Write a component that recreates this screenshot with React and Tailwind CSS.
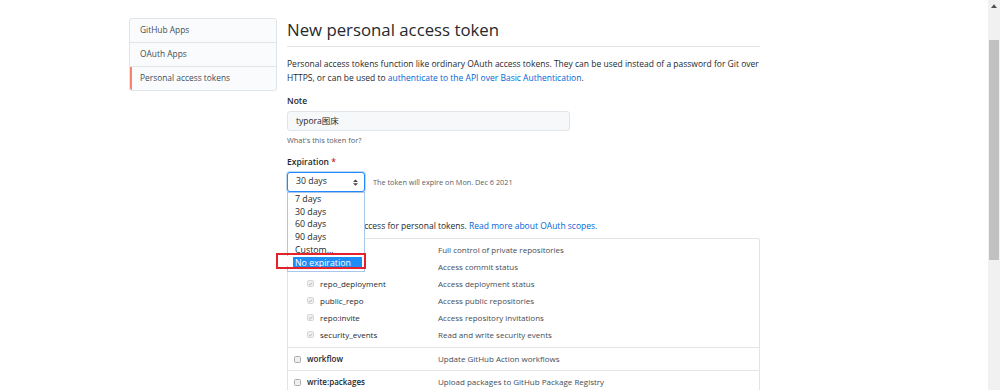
function Check({ checked, disabled }) {
  return (
    <span
      className={
        "inline-flex h-[7px] w-[7px] shrink-0 items-center justify-center rounded-[1.5px] border " +
        (disabled ? "border-[#d6d6d6] bg-[#efefef]" : "border-[#ababab] bg-[#f0f0f0]")
      }
    >
      {checked && (
        <svg viewBox="0 0 8 8" className="h-[6px] w-[6px]">
          <path d="M1.5 4.2 L3.2 5.8 L6.5 2" fill="none" stroke="#a8a8a8" strokeWidth="1.1" />
        </svg>
      )}
    </span>
  );
}

function SubRow({ label, desc }) {
  return (
    <div className="flex h-[17px] items-center">
      <div className="flex w-[150px] items-center gap-[6px] pl-[19px]">
        <Check checked disabled />
        <span>{label}</span>
      </div>
      <span className="text-[#444d56]">{desc}</span>
    </div>
  );
}

function TopRow({ label, desc }) {
  return (
    <div className="flex h-[23px] items-center border-t border-[#e1e4e8]">
      <div className="flex w-[150px] items-center gap-[6px] pl-[6px]">
        <Check />
        <span className="font-semibold">{label}</span>
      </div>
      <span className="text-[#444d56]">{desc}</span>
    </div>
  );
}

export default function App() {
  return (
    <div className="flex h-[390px] w-[1000px] overflow-hidden bg-white font-['Open_Sans','Noto_Sans_CJK_SC',sans-serif] text-[#24292e]">
      <div className="flex flex-1 flex-col">
        <div className="h-[2px]" />
        <div className="h-px bg-[#e6e6ee]" />
        <div className="flex gap-[10px] pl-[129px] pt-[18px]">
          {/* Sidebar */}
          <div className="flex h-[73px] w-[148px] flex-col overflow-hidden rounded-[3px] border border-[#e1e4e8] bg-[#fafbfc] text-[8.4px] text-[#444d56]">
            <div className="flex h-[24px] items-center border-b border-[#e1e4e8] pl-[10px]">GitHub Apps</div>
            <div className="flex h-[24px] items-center border-b border-[#e1e4e8] pl-[10px]">OAuth Apps</div>
            <div className="flex h-[23px] items-center border-l-2 border-[#f9826c] pl-[8px]">Personal access tokens</div>
          </div>

          {/* Main */}
          <div className="flex w-[473px] flex-col">
            <div className="border-b border-[#e1e4e8] pb-[4px]">
              <h2 className="text-[16.8px] leading-[24px] font-normal">New personal access token</h2>
            </div>
            <div className="mt-[10px] text-[8.5px] leading-[14px]">
              <div className="whitespace-nowrap">
                Personal access tokens function like ordinary OAuth access tokens. They can be used instead of a password for Git over
              </div>
              <div className="whitespace-nowrap">
                HTTPS, or can be used to{" "}
                <span className="text-[#0366d6]">authenticate to the API over Basic Authentication</span>.
              </div>
            </div>

            <div className="mt-[9px] text-[8.5px] leading-[14px] font-semibold">Note</div>
            <div className="mt-[3px] flex h-[20px] w-[283px] items-center rounded-[3px] border border-[#e1e4e8] bg-[#f6f8fa] pl-[8px] text-[8.5px]">
              typora图床
            </div>
            <div className="mt-[3px] text-[7.4px] leading-[12px] text-[#586069]">What's this token for?</div>

            <div className="mt-[9px] text-[8.5px] leading-[14px] font-semibold">
              Expiration <span className="text-[#cb2431]">*</span>
            </div>
            <div className="relative mt-[3px] flex items-center gap-[8px]">
              <div className="flex h-[20px] w-[78px] items-center justify-between rounded-[3px] border border-[#2188ff] bg-white pl-[8px] pr-[6px] text-[8.7px] shadow-[0_0_0_1px_rgba(3,102,214,0.25)]">
                <span>30 days</span>
                <svg viewBox="0 0 8 10" className="h-[7px] w-[5px]">
                  <path d="M4 0 L8 4 H0 Z M0 6 H8 L4 10 Z" fill="#444" />
                </svg>
              </div>
              <span className="text-[7.3px] text-[#586069]">The token will expire on Mon. Dec 6 2021</span>

              {/* Dropdown list */}
              <div className="absolute left-0 top-[20px] z-10 flex w-[78px] flex-col border border-[#a9c7ea] bg-white pb-[2px] text-[8.8px] leading-[12.7px]">
                <div className="pl-[7px]">7 days</div>
                <div className="pl-[7px]">30 days</div>
                <div className="pl-[7px]">60 days</div>
                <div className="pl-[7px]">90 days</div>
                <div className="pl-[7px]">Custom...</div>
                <div className="ml-[5px] mr-[2px] bg-[#1e8cf5] pl-[2px] text-white">No expiration</div>
              </div>
              {/* Red annotation box */}
              <div className="absolute left-[-11px] top-[81px] z-20 flex h-[16px] w-[90px] items-center border-2 border-[#e3222c] pl-[2px]">
                <span className="h-[10px] w-[9px] bg-white" />
              </div>
            </div>

            <div className="mt-[9px] text-[8.5px] leading-[14px] font-semibold">Select scopes</div>
            <div className="mt-[4px] text-[8.5px] leading-[14px]">
              Scopes define the access for personal tokens.{" "}
              <span className="text-[#0366d6]">Read more about OAuth scopes.</span>
            </div>

            <div className="mt-[5px] rounded-t-[3px] border-x border-t border-[#e1e4e8] text-[8px]">
              <div className="pb-[4px] pt-[2px]">
                <div className="flex h-[17px] items-center">
                  <div className="flex w-[150px] items-center gap-[6px] pl-[6px]">
                    <Check />
                    <span className="font-semibold">repo</span>
                  </div>
                  <span className="text-[#444d56]">Full control of private repositories</span>
                </div>
                <SubRow label="repo:status" desc="Access commit status" />
                <SubRow label="repo_deployment" desc="Access deployment status" />
                <SubRow label="public_repo" desc="Access public repositories" />
                <SubRow label="repo:invite" desc="Access repository invitations" />
                <SubRow label="security_events" desc="Read and write security events" />
              </div>
              <TopRow label="workflow" desc="Update GitHub Action workflows" />
              <TopRow label="write:packages" desc="Upload packages to GitHub Package Registry" />
            </div>
          </div>
        </div>
      </div>

      {/* Scrollbar */}
      <div className="flex w-[12px] flex-col items-center bg-[#f1f1f1]">
        <svg viewBox="0 0 8 5" className="mt-[4px] h-[4px] w-[6px]">
          <path d="M4 0 L8 5 H0 Z" fill="#505050" />
        </svg>
        <div className="mt-[32px] h-[220px] w-[10px] bg-[#c1c1c1]" />
      </div>
    </div>
  );
}
